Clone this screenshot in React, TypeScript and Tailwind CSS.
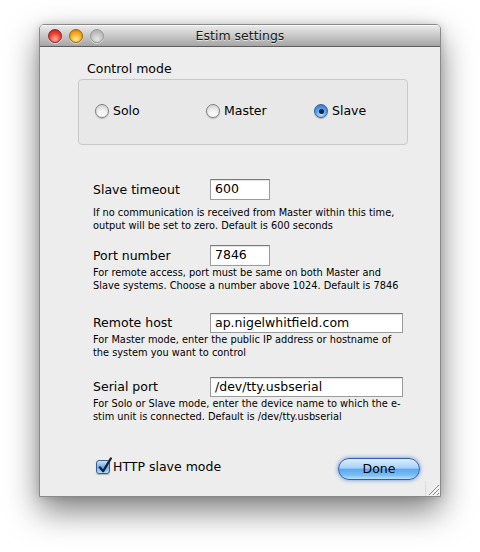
import React from "react";

const FONT = { fontFamily: '"DejaVu Sans", "Noto Sans", sans-serif' };

function Radio({ checked, label }: { checked?: boolean; label: string }) {
  return (
    <div className="flex items-center gap-[4px]">
      {checked ? (
        <div className="w-[14px] h-[14px] rounded-full border border-[#34609f] bg-[radial-gradient(circle_at_50%_80%,#bfe3ff_0%,#5aa4ee_45%,#2c6fc9_100%)] shadow-[0_1px_1px_rgba(0,0,0,0.25)] flex items-center justify-center">
          <div className="w-[5px] h-[5px] rounded-full bg-[#15213a]" />
        </div>
      ) : (
        <div className="w-[14px] h-[14px] rounded-full border border-[#808080] bg-[radial-gradient(circle_at_50%_85%,#ffffff_0%,#f2f2f2_40%,#c9c9c9_100%)] shadow-[0_1px_1px_rgba(0,0,0,0.2)]" />
      )}
      <span className="text-[12.5px] leading-[16px] text-black">{label}</span>
    </div>
  );
}

function Field({ label, value, wide }: { label: string; value: string; wide?: boolean }) {
  return (
    <div className="flex items-center">
      <div className="w-[117px] text-[12.5px] leading-[16px] text-black whitespace-nowrap">{label}</div>
      <div
        className={
          (wide ? "w-[193px] h-[20px]" : "w-[60px] h-[21px]") +
          " bg-white border border-[#9b9b9b] border-t-[#7a7a7a] shadow-[inset_0_1px_1px_rgba(0,0,0,0.12)] pl-[4px] flex items-center text-[12.5px] text-black whitespace-nowrap"
        }
      >
        {value}
      </div>
    </div>
  );
}

function Desc({ children, className }: { children: React.ReactNode; className?: string }) {
  return (
    <div className={"text-[9.8px] leading-[13px] text-black whitespace-nowrap " + (className || "")}>
      {children}
    </div>
  );
}

export default function App() {
  return (
    <div className="w-[480px] h-[552px] bg-white pt-[24px] pl-[39px]" style={FONT}>
      <div className="relative w-[402px] h-[473px] flex flex-col rounded-t-[5px] border border-[#8a8a8a] bg-[#ededed] shadow-[0_14px_32px_rgba(0,0,0,0.5),0_0_8px_rgba(0,0,0,0.15)] overflow-hidden">
        {/* Title bar */}
        <div className="h-[22px] shrink-0 grid grid-cols-[1fr_auto_1fr] items-center bg-gradient-to-b from-[#ececec] via-[#c9c9c9] to-[#a5a5a5] border-b border-[#5c5c5c] shadow-[inset_0_1px_0_rgba(255,255,255,0.7)]">
          <div className="flex items-center gap-[7px] pl-[8px]">
            <div className="w-[14px] h-[14px] rounded-full border border-[#8a2a2a] bg-[radial-gradient(circle_at_50%_75%,#ffb4a8_0%,#f24d3c_45%,#b3100c_100%)] shadow-[0_1px_0_rgba(255,255,255,0.5)]" />
            <div className="w-[14px] h-[14px] rounded-full border border-[#9a6210] bg-[radial-gradient(circle_at_50%_75%,#fff0a0_0%,#f8b42b_45%,#d27200_100%)] shadow-[0_1px_0_rgba(255,255,255,0.5)]" />
            <div className="w-[14px] h-[14px] rounded-full border border-[#9a9a9a] bg-[radial-gradient(circle_at_50%_75%,#e6e6e6_0%,#c4c4c4_50%,#a4a4a4_100%)] shadow-[0_1px_0_rgba(255,255,255,0.5)]" />
          </div>
          <div className="text-[12.5px] leading-[16px] text-[#1a1a1a] [text-shadow:0_1px_0_rgba(255,255,255,0.6)]">
            Estim settings
          </div>
          <div />
        </div>

        {/* Content */}
        <div className="flex flex-col">
          <div className="ml-[47px] mt-[14px] text-[12.5px] leading-[16px] text-black">Control mode</div>
          <div className="ml-[38px] mt-[2px] w-[330px] h-[66px] rounded-[4px] border border-[#c9c9c9] bg-[#e8e8e8] flex items-start pt-[23px] pl-[16px]">
            <div className="w-[111px]">
              <Radio label="Solo" />
            </div>
            <div className="w-[108px]">
              <Radio label="Master" />
            </div>
            <div>
              <Radio label="Slave" checked />
            </div>
          </div>

          <div className="pl-[53px] flex flex-col">
            <div className="mt-[34px]">
              <Field label="Slave timeout" value="600" />
            </div>
            <Desc className="mt-[6px]">
              If no communication is received from Master within this time,
              <br />
              output will be set to zero. Default is 600 seconds
            </Desc>

            <div className="mt-[13px]">
              <Field label="Port number" value="7846" />
            </div>
            <Desc>
              For remote access, port must be same on both Master and
              <br />
              Slave systems. Choose a number above 1024. Default is 7846
            </Desc>

            <div className="mt-[21px]">
              <Field label="Remote host" value="ap.nigelwhitfield.com" wide />
            </div>
            <Desc>
              For Master mode, enter the public IP address or hostname of
              <br />
              the system you want to control
            </Desc>

            <div className="mt-[18px]">
              <Field label="Serial port" value="/dev/tty.usbserial" wide />
            </div>
            <Desc>
              For Solo or Slave mode, enter the device name to which the e-
              <br />
              stim unit is connected. Default is /dev/tty.usbserial
            </Desc>
          </div>

          <div className="mt-[35px] flex items-start">
            <div className="ml-[56px] mt-[1px] flex items-center gap-[3px]">
              <div className="relative w-[14px] h-[14px] rounded-[3px] border border-[#3b5d93] bg-gradient-to-b from-[#cfe5fb] via-[#6ea9ea] to-[#b3dafc] shadow-[0_1px_1px_rgba(0,0,0,0.25)]">
                <svg className="absolute left-[1px] top-[-4px]" width="15" height="17" viewBox="0 0 15 17">
                  <path d="M2 10.5 L5.2 14.2 L12.8 1.5" fill="none" stroke="#1b2233" strokeWidth="2.4" strokeLinecap="round" strokeLinejoin="round" />
                </svg>
              </div>
              <span className="text-[12.5px] leading-[16px] text-black">HTTP slave mode</span>
            </div>
            <div className="ml-auto mr-[20px] w-[82px] h-[22px] rounded-full border border-[#2f5fa8] bg-[linear-gradient(to_bottom,#dcedfd_0%,#a8d1f7_45%,#5ea8ef_52%,#78bcf6_80%,#b8e2ff_100%)] shadow-[0_0_4px_rgba(50,110,210,0.75)] flex items-center justify-center text-[12.5px] text-black">
              Done
            </div>
          </div>
        </div>

        {/* Resize grip */}
        <svg className="absolute right-0 bottom-0" width="15" height="15" viewBox="0 0 15 15">
          <rect x="0" y="0" width="15" height="15" fill="#ededed" />
          <line x1="0" y1="15" x2="0" y2="0" stroke="#d0d0d0" strokeWidth="1" />
          <line x1="4" y1="14" x2="14" y2="4" stroke="#8d8d8d" strokeWidth="1" />
          <line x1="5" y1="15" x2="15" y2="5" stroke="#ffffff" strokeWidth="1" />
          <line x1="8" y1="14" x2="14" y2="8" stroke="#8d8d8d" strokeWidth="1" />
          <line x1="9" y1="15" x2="15" y2="9" stroke="#ffffff" strokeWidth="1" />
          <line x1="12" y1="14" x2="14" y2="12" stroke="#8d8d8d" strokeWidth="1" />
        </svg>
      </div>
    </div>
  );
}
